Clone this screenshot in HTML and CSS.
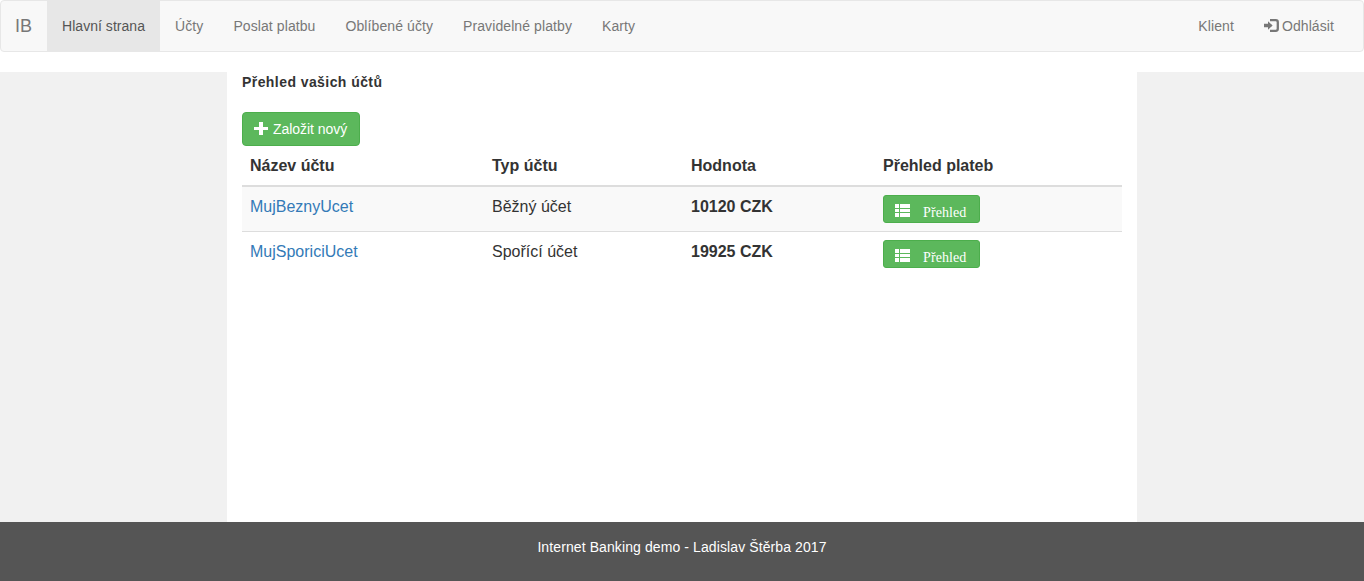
FILE: index.html
```html
<!DOCTYPE html>
<html lang="cs">
<head>
<meta charset="utf-8">
<title>Internet Banking</title>
<link rel="stylesheet" href="styles.css">
</head>
<body>
<nav class="navbar">
  <a class="brand">IB</a>
  <a class="nav-link active">Hlavní strana</a>
  <a class="nav-link">Účty</a>
  <a class="nav-link">Poslat platbu</a>
  <a class="nav-link">Oblíbené účty</a>
  <a class="nav-link">Pravidelné platby</a>
  <a class="nav-link">Karty</a>
  <div class="nav-right">
    <a class="nav-link">Klient</a>
    <a class="nav-link logout"><svg class="icon-login" viewBox="0 0 15 13" width="15" height="13"><path fill="currentColor" d="M0 4.800h4V2.200l4.600 4.300L4 10.800V8.200H0z"/><path fill="none" stroke="currentColor" stroke-width="2.300" d="M6 1.200h5.800q2 0 2 2v6.600q0 2-2 2H6"/></svg><span>Odhlásit</span></a>
  </div>
</nav>
<div class="content">
  <aside class="side"></aside>
  <main class="main">
    <h1 class="title">Přehled vašich účtů</h1>
    <button class="btn btn-new"><svg width="14" height="14" viewBox="0 0 14 14"><path fill="currentColor" d="M5 0h4v5h5v3H9v5H5V8H0V5h5z"/></svg><span>Založit nový</span></button>
    <table class="accounts">
      <colgroup><col class="c-name"><col class="c-type"><col class="c-value"><col></colgroup>
      <thead><tr><th>Název účtu</th><th>Typ účtu</th><th>Hodnota</th><th>Přehled plateb</th></tr></thead>
      <tbody>
        <tr class="striped"><td><a class="link">MujBeznyUcet</a></td><td>Běžný účet</td><td class="amount">10120 CZK</td>
          <td><button class="btn btn-list"><svg width="15" height="13" viewBox="0 0 15 13"><path fill="currentColor" d="M0 0h4v4H0zM5 0h10v4H5zM0 5h4v3H0zM5 5h10v3H5zM0 9h4v4H0zM5 9h10v4H5z"/></svg><span>Přehled</span></button></td></tr>
        <tr><td><a class="link">MujSporiciUcet</a></td><td>Spořící účet</td><td class="amount">19925 CZK</td>
          <td><button class="btn btn-list"><svg width="15" height="13" viewBox="0 0 15 13"><path fill="currentColor" d="M0 0h4v4H0zM5 0h10v4H5zM0 5h4v3H0zM5 5h10v3H5zM0 9h4v4H0zM5 9h10v4H5z"/></svg><span>Přehled</span></button></td></tr>
      </tbody>
    </table>
  </main>
  <aside class="side"></aside>
</div>
<footer class="footer">Internet Banking demo - Ladislav Štěrba 2017</footer>
</body>
</html>
```
FILE: styles.css
```css
* { box-sizing: border-box; }
body {
  margin: 0;
  font: 14px/20px "Liberation Sans", Arial, sans-serif;
  color: #333;
  background: #fff;
}
.navbar {
  display: flex;
  height: 52px;
  margin-bottom: 20px;
  background: #f8f8f8;
  border: 1px solid #e7e7e7;
  border-radius: 4px;
}
.brand { padding: 15px 14px; width: 46px; font-size: 18px; color: #777; }
.nav-link { padding: 15px; color: #777; white-space: nowrap; letter-spacing: 0.09px; }
.nav-link.active { width: 113px; color: #555; background: #e7e7e7; letter-spacing: 0.04px; }
.nav-right { display: flex; margin-left: auto; margin-right: 14px; }
.logout { display: flex; gap: 3px; }
.icon-login { margin-top: 3px; }
.content { display: flex; height: 450px; }
.side { flex: 1; background: #f1f1f1; }
.main { width: 910px; padding: 0 15px; }
.title { margin: 0 0 20px; font-size: 14px; line-height: 20px; letter-spacing: 0.43px; }
.btn {
  display: flex;
  align-items: center;
  margin: 0;
  color: #fff;
  background: #5cb85c;
  border: 1px solid #4cae4c;
}
.btn-new {
  width: 118px;
  height: 34px;
  padding: 0 11px;
  gap: 5px;
  border-radius: 4px;
  font: 14px/20px "Liberation Sans", Arial, sans-serif;
  letter-spacing: -0.05px;
  white-space: nowrap;
}
.btn-list {
  width: 97px;
  height: 28px;
  padding: 2px 0 0 11px;
  gap: 13px;
  border-radius: 3px;
  font: 14px/14px "Liberation Serif", "Times New Roman", serif;
  letter-spacing: 0.1px;
}
.btn-list span { padding-top: 6px; }
.accounts {
  width: 880px;
  table-layout: fixed;
  border-collapse: separate;
  border-spacing: 0;
  font-size: 16px;
  line-height: 23px;
}
.accounts th { height: 41px; padding: 8px; text-align: left; border-bottom: 2px solid #ddd; }
.accounts td { height: 44px; padding: 8px; vertical-align: top; }
.accounts .striped td { height: 45px; background: #f9f9f9; border-bottom: 1px solid #ddd; }
.c-name { width: 242px; }
.c-type { width: 199px; }
.c-value { width: 192px; }
.link { color: #337ab7; }
.amount { font-weight: bold; }
.footer {
  height: 59px;
  padding: 15px;
  color: #fff;
  background: #555;
  text-align: center;
  letter-spacing: 0.1px;
}
```
